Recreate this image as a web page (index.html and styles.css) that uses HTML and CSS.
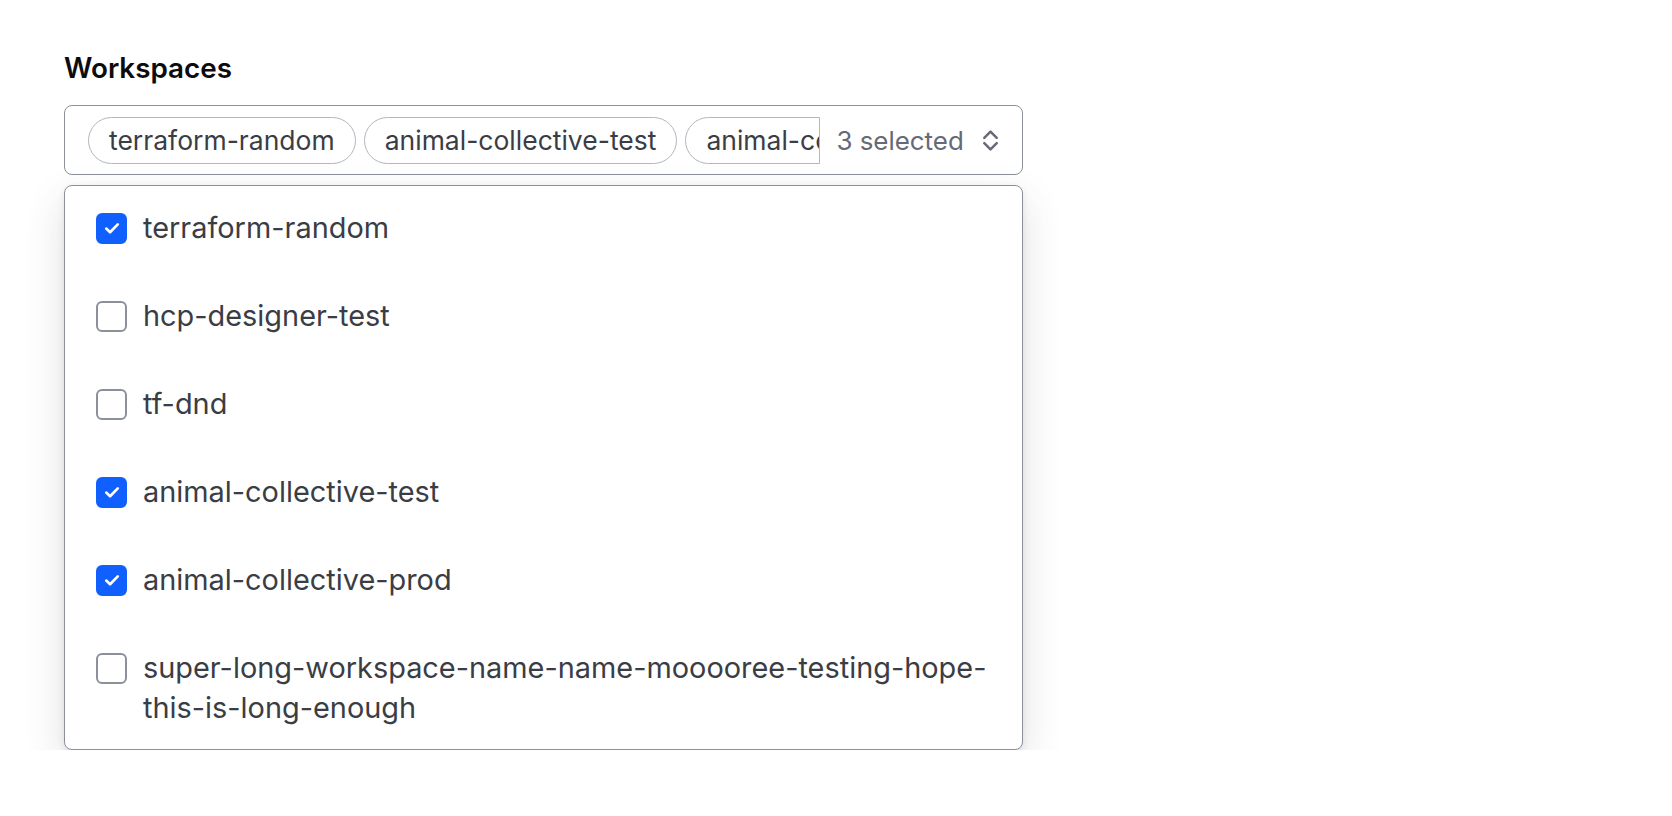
FILE: index.html
```html
<!DOCTYPE html>
<html lang="en">
<head>
<meta charset="utf-8">
<title>Workspaces</title>
<link rel="stylesheet" href="styles.css">
</head>
<body>
<div class="page">
  <div class="field">
    <div class="label">Workspaces</div>
    <div class="trigger">
      <div class="chips">
        <span class="chip">terraform-random</span>
        <span class="chip">animal-collective-test</span>
        <span class="chip chip-clipped">animal-collective-prod</span>
      </div>
      <span class="count">3 selected</span>
      <svg class="chevron" viewBox="0 0 18 26" width="19" height="27" aria-hidden="true">
        <path d="M3 10.5L9 4.5L15 10.5" fill="none" stroke="#656a76" stroke-width="2.4" stroke-linecap="round" stroke-linejoin="round"/>
        <path d="M3 15.5L9 21.5L15 15.5" fill="none" stroke="#656a76" stroke-width="2.4" stroke-linecap="round" stroke-linejoin="round"/>
      </svg>
    </div>
    <ul class="dropdown">
      <li class="option"><span class="box checked"><svg viewBox="0 0 16 16" width="22" height="22"><path d="M3.8 8.4L6.6 11.1L12.2 5.4" fill="none" stroke="#fff" stroke-width="1.9" stroke-linecap="round" stroke-linejoin="round"/></svg></span><span class="text">terraform-random</span></li>
      <li class="option"><span class="box"></span><span class="text">hcp-designer-test</span></li>
      <li class="option"><span class="box"></span><span class="text">tf-dnd</span></li>
      <li class="option"><span class="box checked"><svg viewBox="0 0 16 16" width="22" height="22"><path d="M3.8 8.4L6.6 11.1L12.2 5.4" fill="none" stroke="#fff" stroke-width="1.9" stroke-linecap="round" stroke-linejoin="round"/></svg></span><span class="text">animal-collective-test</span></li>
      <li class="option"><span class="box checked"><svg viewBox="0 0 16 16" width="22" height="22"><path d="M3.8 8.4L6.6 11.1L12.2 5.4" fill="none" stroke="#fff" stroke-width="1.9" stroke-linecap="round" stroke-linejoin="round"/></svg></span><span class="text">animal-collective-prod</span></li>
      <li class="option"><span class="box"></span><span class="text">super-long-workspace-name-name-mooooree-testing-hope-this-is-long-enough</span></li>
    </ul>
  </div>
</div>
</body>
</html>
```

FILE: styles.css
```css
* { box-sizing: border-box; }

html, body {
  margin: 0;
  padding: 0;
  background: #ffffff;
}

body {
  font-family: Inter, "Noto Sans", "Liberation Sans", sans-serif;
  color: #3b3d45;
}

.page {
  padding: 52px 0 0 64px;
}

.field {
  width: 959px;
}

.label {
  font-size: 27.8px;
  font-weight: 600;
  line-height: 32px;
  color: #0c0c0e;
  margin-bottom: 21px;
}

.trigger {
  height: 70px;
  border: 1px solid #8c909c;
  border-radius: 8px;
  display: flex;
  align-items: center;
  padding: 0 22px 0 23px;
  background: #fff;
}

.chips {
  display: flex;
  gap: 8px;
  overflow: hidden;
  flex: none;
}

.chip {
  flex: none;
  height: 47px;
  display: flex;
  align-items: center;
  padding: 0 20px;
  border: 1.5px solid #b2b6bd;
  border-radius: 24px;
  font-size: 26.5px;
  color: #3b3d45;
  white-space: nowrap;
}

.chip-clipped {
  width: 135px;
  overflow: hidden;
  border-top-right-radius: 0;
  border-bottom-right-radius: 0;
  padding-right: 0;
  border-right-width: 1px;
  justify-content: flex-start;
}

.count {
  margin-left: 16px;
  font-size: 25.9px;
  color: #656a76;
  white-space: nowrap;
}

.chevron {
  margin-left: auto;
  flex: none;
}

.dropdown {
  list-style: none;
  margin: 10px 0 0 0;
  padding: 0;
  border: 1px solid #8c909c;
  border-radius: 8px;
  background: #fff;
  box-shadow: 0 2px 6px rgba(59, 61, 69, 0.1), 0 16px 40px rgba(59, 61, 69, 0.16);
}

.option {
  display: flex;
  align-items: flex-start;
  gap: 16px;
  padding: 22px 32px 26px 31px;
  font-size: 28.9px;
  line-height: 40px;
  color: #3b3d45;
}

.option:last-child {
  padding-bottom: 21px;
}

.box {
  flex: none;
  width: 31px;
  height: 31px;
  margin-top: 4.5px;
  border: 2px solid #8c909c;
  border-radius: 6px;
  display: flex;
  align-items: center;
  justify-content: center;
  background: #fff;
}

.box.checked {
  background: #1060ff;
  border-color: #1060ff;
}

.text {
  min-width: 0;
}
```
